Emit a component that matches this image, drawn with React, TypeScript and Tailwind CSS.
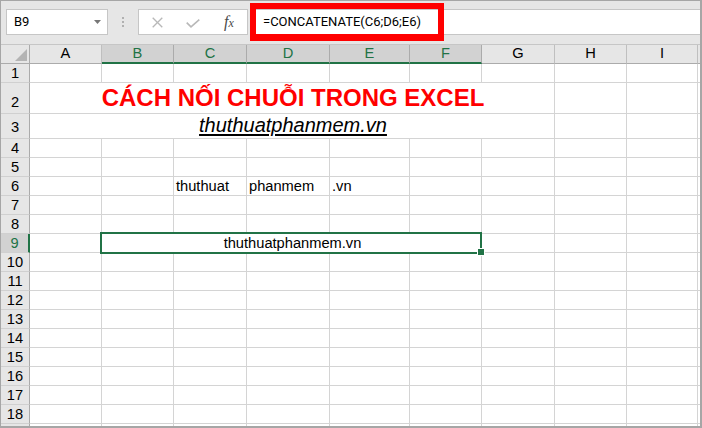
import React from 'react';

type Col = { l: string; w: string; sel?: boolean };

const cols: Col[] = [
  { l: 'A', w: 'w-[72px]' },
  { l: 'B', w: 'w-[72px]', sel: true },
  { l: 'C', w: 'w-[73px]', sel: true },
  { l: 'D', w: 'w-[83px]', sel: true },
  { l: 'E', w: 'w-[80px]', sel: true },
  { l: 'F', w: 'w-[72px]', sel: true },
  { l: 'G', w: 'w-[73px]' },
  { l: 'H', w: 'w-[72px]' },
  { l: 'I', w: 'w-[71px]' },
];

const cellBase =
  'shrink-0 h-full border-r border-b border-[#d4d4d4] bg-white flex items-end pb-[1px] pl-[2px] text-[14.67px] leading-[15px] text-black whitespace-nowrap';
const filler = 'flex-1 h-full border-b border-[#d4d4d4] bg-white';
const rowHeadBase =
  'w-[29px] shrink-0 h-full border-r border-b border-r-[#ababab] border-b-[#d0d0d0] bg-[#e6e6e6] flex items-end justify-center text-[14.67px] leading-[15px] text-black';

function PlainRow({ n }: { n?: number }) {
  return (
    <div className="flex h-[19px] shrink-0">
      <div className={`${rowHeadBase} pb-[1px]`}>{n}</div>
      {cols.map((c) => (
        <div key={c.l} className={`${cellBase} ${c.w}`} />
      ))}
      <div className={filler} />
    </div>
  );
}

export default function App() {
  return (
    <div className="relative w-[702px] h-[428px] overflow-hidden bg-[#e6e6e6] border-l border-t border-r-2 border-b-2 border-[#a6a6a6] font-['Liberation_Sans',Arial,sans-serif] flex flex-col">
      {/* Formula bar */}
      <div className="h-[44px] shrink-0 border-b border-[#c6c6c6] flex items-start pt-[8px] pl-[5px] bg-[#e6e6e6]">
        <div className="w-[102px] h-[26px] shrink-0 bg-white border border-[#c6c6c6] flex items-center justify-between pl-[7px] pr-[6px]">
          <span className="font-['Roboto',sans-serif] text-[13px] leading-[16px] text-black">B9</span>
          <svg width="7" height="4" viewBox="0 0 7 4">
            <polygon points="0,0 7,0 3.5,4" fill="#777777" />
          </svg>
        </div>
        <div className="ml-[14px] mt-[8px] flex flex-col gap-[2px] shrink-0">
          <div className="w-[2px] h-[2px] bg-[#b0b0b0]" />
          <div className="w-[2px] h-[2px] bg-[#b0b0b0]" />
          <div className="w-[2px] h-[2px] bg-[#b0b0b0]" />
        </div>
        <div className="ml-[14px] w-[110px] h-[26px] shrink-0 bg-white border border-[#c6c6c6] flex">
          <div className="w-[36px] h-full flex items-center justify-center pt-[1px]">
            <svg width="11" height="11" viewBox="0 0 11 11">
              <line x1="0.7" y1="0.7" x2="10.3" y2="10.3" stroke="#b8b8b8" strokeWidth="1.3" />
              <line x1="10.3" y1="0.7" x2="0.7" y2="10.3" stroke="#b8b8b8" strokeWidth="1.3" />
            </svg>
          </div>
          <div className="w-[36px] h-full flex items-center justify-center pt-[3px]">
            <svg width="14" height="9" viewBox="0 0 14 9">
              <polyline points="0.7,3.6 5,7.9 13.3,0.7" fill="none" stroke="#b8b8b8" strokeWidth="1.6" />
            </svg>
          </div>
          <div className="w-[36px] h-full flex items-center justify-center">
            <span className="font-['Liberation_Serif',serif] italic text-[#4a4a4a] text-[16px] leading-[16px]">
              f<span className="text-[12px]">x</span>
            </span>
          </div>
        </div>
        <div className="relative ml-[2px] flex-1 h-[26px] bg-white border-t border-b border-l border-[#c6c6c6] flex items-center pl-[12px]">
          <span className="font-['Roboto',sans-serif] text-[13px] leading-[16px] text-black whitespace-nowrap">
            =CONCATENATE(C6;D6;E6)
          </span>
          <div className="absolute left-[-1px] top-[-7px] w-[194px] h-[38px] border-[6px] border-b-[7px] border-[#ff0000]" />
        </div>
      </div>

      {/* Column headers */}
      <div className="flex h-[19px] shrink-0">
        <div className="w-[29px] shrink-0 h-full border-r border-b border-r-[#ababab] border-b-[#ababab] bg-[#e6e6e6] flex items-end justify-end pr-[2px] pb-[2px]">
          <svg width="12" height="12" viewBox="0 0 12 12">
            <polygon points="12,0 12,12 0,12" fill="#b4b4b4" />
          </svg>
        </div>
        {cols.map((c) =>
          c.sel ? (
            <div
              key={c.l}
              className={`${c.w} shrink-0 h-full border-r border-r-[#ababab] border-b-2 border-b-[#217346] bg-[#d2d2d2] flex items-end justify-center pb-[1px] text-[14.67px] leading-[15px] text-[#217346]`}
            >
              {c.l}
            </div>
          ) : (
            <div
              key={c.l}
              className={`${c.w} shrink-0 h-full border-r border-b border-r-[#bfbfbf] border-b-[#ababab] bg-[#e6e6e6] flex items-end justify-center pb-[2px] text-[14.67px] leading-[15px] text-black`}
            >
              {c.l}
            </div>
          )
        )}
        <div className="flex-1 h-full border-b border-[#ababab] bg-[#e6e6e6]" />
      </div>

      {/* Row 1 */}
      <PlainRow n={1} />

      {/* Row 2 - merged A2:G2 */}
      <div className="flex h-[31px] shrink-0">
        <div className={`${rowHeadBase} pb-[3px]`}>2</div>
        <div className={`${cellBase} w-[525px] justify-center pl-0`}>
          <span className="text-[24px] leading-[28px] font-bold text-[#ff0000]">CÁCH NỐI CHUỖI TRONG EXCEL</span>
        </div>
        <div className={`${cellBase} w-[72px]`} />
        <div className={`${cellBase} w-[71px]`} />
        <div className={filler} />
      </div>

      {/* Row 3 - merged A3:G3 */}
      <div className="flex h-[25px] shrink-0">
        <div className={`${rowHeadBase} pb-[3px]`}>3</div>
        <div className={`${cellBase} w-[525px] justify-center pl-0`}>
          <span className="text-[20px] leading-[23px] italic underline underline-offset-[2px] text-black">thuthuatphanmem.vn</span>
        </div>
        <div className={`${cellBase} w-[72px]`} />
        <div className={`${cellBase} w-[71px]`} />
        <div className={filler} />
      </div>

      <PlainRow n={4} />
      <PlainRow n={5} />

      {/* Row 6 */}
      <div className="flex h-[19px] shrink-0">
        <div className={`${rowHeadBase} pb-[1px]`}>6</div>
        <div className={`${cellBase} w-[72px]`} />
        <div className={`${cellBase} w-[72px]`} />
        <div className={`${cellBase} w-[73px]`}>thuthuat</div>
        <div className={`${cellBase} w-[83px]`}>phanmem</div>
        <div className={`${cellBase} w-[80px]`}>.vn</div>
        <div className={`${cellBase} w-[72px]`} />
        <div className={`${cellBase} w-[73px]`} />
        <div className={`${cellBase} w-[72px]`} />
        <div className={`${cellBase} w-[71px]`} />
        <div className={filler} />
      </div>

      <PlainRow n={7} />
      <PlainRow n={8} />

      {/* Row 9 - merged B9:F9, selected */}
      <div className="flex h-[19px] shrink-0 relative z-10">
        <div className="w-[29px] shrink-0 h-full border-r-2 border-b border-r-[#217346] border-b-[#d0d0d0] bg-[#d2d2d2] flex items-end justify-center pb-[1px] text-[14.67px] leading-[15px] text-[#217346]">
          9
        </div>
        <div className={`${cellBase} w-[72px]`} />
        <div className={`${cellBase} w-[380px] justify-center pl-0 relative`}>
          thuthuatphanmem.vn
          <div className="absolute left-[-2px] top-[-2px] w-[382px] h-[22px] border-2 border-[#217346]" />
          <div className="absolute left-[375px] top-[14px] w-[8px] h-[8px] bg-[#217346] border border-white" />
        </div>
        <div className={`${cellBase} w-[73px]`} />
        <div className={`${cellBase} w-[72px]`} />
        <div className={`${cellBase} w-[71px]`} />
        <div className={filler} />
      </div>

      {[10, 11, 12, 13, 14, 15, 16, 17, 18].map((n) => (
        <PlainRow key={n} n={n} />
      ))}
      <PlainRow />
    </div>
  );
}
